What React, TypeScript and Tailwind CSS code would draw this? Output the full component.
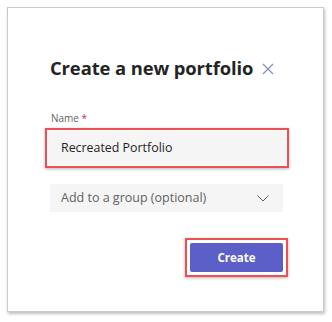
import React from 'react';

export default function App() {
  return (
    <div className="w-[332px] h-[322px] bg-white p-[7px] font-['Open_Sans',sans-serif]">
      <div className="w-[317px] h-[305px] border border-[#c9c9c9] bg-white shadow-[1px_2px_3px_rgba(0,0,0,0.25)] pl-[42px] pr-[35px] pt-[46px]">
        {/* header */}
        <div className="flex items-center gap-[9px]">
          <h1 className="text-[18.4px] font-bold leading-[28px] text-[#242424] tracking-[-0.1px]">
            Create a new portfolio
          </h1>
          <svg width="12" height="12" viewBox="0 0 12 12" className="mt-[2px]">
            <path d="M1 1L11 11M11 1L1 11" stroke="#8b8cd0" strokeWidth="1.3" fill="none" />
          </svg>
        </div>

        {/* name field */}
        <div className="mt-[30px]">
          <label className="block text-[10px] leading-[12px] text-[#616161] ml-[1px]">
            Name <span className="text-[#c4314b]">*</span>
          </label>
          <div className="mt-[4px] -ml-[5px] w-[244px] h-[40px] border-2 border-[#ec4f55] shadow-[0_1px_3px_rgba(0,0,0,0.3)] p-[1px]">
            <div className="h-full bg-[#f5f5f5] flex items-center pl-[13px] text-[12.4px] text-[#242424]">
              Recreated Portfolio
            </div>
          </div>
        </div>

        {/* group dropdown */}
        <div className="mt-[16px] w-[233px] h-[28px] bg-[#f5f5f5] flex items-center justify-between pl-[11px] pr-[14px]">
          <span className="text-[12.5px] text-[#616161]">Add to a group (optional)</span>
          <svg width="12" height="7" viewBox="0 0 12 7">
            <path d="M0.5 0.5L6 6L11.5 0.5" stroke="#616161" strokeWidth="1" fill="none" />
          </svg>
        </div>

        {/* actions */}
        <div className="mt-[26px] flex justify-end">
          <div className="w-[103px] h-[39px] border-2 border-[#ec4f55] shadow-[0_1px_3px_rgba(0,0,0,0.3)] p-[3px]">
            <button className="w-full h-full bg-[#5b5fc7] text-white text-[11.5px] font-bold rounded-[2px]">
              Create
            </button>
          </div>
        </div>
      </div>
    </div>
  );
}
